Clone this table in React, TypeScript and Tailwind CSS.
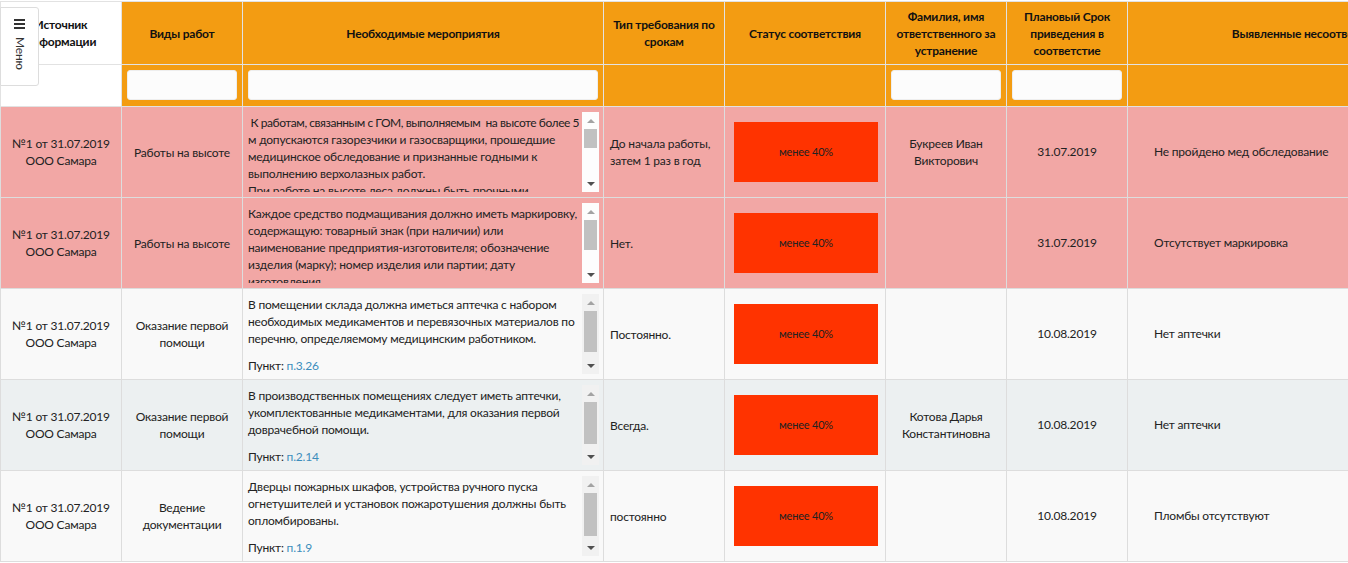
import React from "react";

type Row = {
  bg: string;
  track: string;
  kind: string[];
  lines: string[];
  tightFirst?: boolean;
  punkt?: string;
  term: string[];
  name: string[];
  date: string;
  issue: string;
  thumbH: number;
};

const rows: Row[] = [
  {
    bg: "bg-[#f2a7a5]",
    track: "bg-[#fdfdfd]",
    kind: ["Работы на высоте"],
    lines: [
      "\u00a0К работам, связанным с ГОМ, выполняемым \u00a0на высоте более 5",
      "м допускаются газорезчики и газосварщики, прошедшие",
      "медицинское обследование и признанные годными к",
      "выполнению верхолазных работ.",
      "При работе на высоте леса должны быть прочными,",
    ],
    tightFirst: true,
    term: ["До начала работы,", "затем 1 раз в год"],
    name: ["Букреев Иван", "Викторович"],
    date: "31.07.2019",
    issue: "Не пройдено мед обследование",
    thumbH: 19,
  },
  {
    bg: "bg-[#f2a7a5]",
    track: "bg-[#fdfdfd]",
    kind: ["Работы на высоте"],
    lines: [
      "Каждое средство подмащивания должно иметь маркировку,",
      "содержащую: товарный знак (при наличии) или",
      "наименование предприятия-изготовителя; обозначение",
      "изделия (марку); номер изделия или партии; дату",
      "изготовления.",
    ],
    term: ["Нет."],
    name: [],
    date: "31.07.2019",
    issue: "Отсутствует маркировка",
    thumbH: 30,
  },
  {
    bg: "bg-[#f9f9f9]",
    track: "bg-[#f1f1f1]",
    kind: ["Оказание первой", "помощи"],
    lines: [
      "В помещении склада должна иметься аптечка с набором",
      "необходимых медикаментов и перевязочных материалов по",
      "перечню, определяемому медицинским работником.",
    ],
    punkt: "п.3.26",
    term: ["Постоянно."],
    name: [],
    date: "10.08.2019",
    issue: "Нет аптечки",
    thumbH: 41,
  },
  {
    bg: "bg-[#ecf0f1]",
    track: "bg-[#f1f1f1]",
    kind: ["Оказание первой", "помощи"],
    lines: [
      "В производственных помещениях следует иметь аптечки,",
      "укомплектованные медикаментами, для оказания первой",
      "доврачебной помощи.",
    ],
    punkt: "п.2.14",
    term: ["Всегда."],
    name: ["Котова Дарья", "Константиновна"],
    date: "10.08.2019",
    issue: "Нет аптечки",
    thumbH: 42,
  },
  {
    bg: "bg-[#f9f9f9]",
    track: "bg-[#f1f1f1]",
    kind: ["Ведение", "документации"],
    lines: [
      "Дверцы пожарных шкафов, устройства ручного пуска",
      "огнетушителей и установок пожаротушения должны быть",
      "опломбированы.",
    ],
    punkt: "п.1.9",
    term: ["постоянно"],
    name: [],
    date: "10.08.2019",
    issue: "Пломбы отсутствуют",
    thumbH: 43,
  },
];

const headers: { w: string; lines: string[]; white?: boolean; filter?: boolean }[] = [
  { w: "w-[121px]", lines: ["Источник", "информации"], white: true },
  { w: "w-[121px]", lines: ["Виды работ"], filter: true },
  { w: "w-[361px]", lines: ["Необходимые мероприятия"], filter: true },
  { w: "w-[121px]", lines: ["Тип требования по", "срокам"] },
  { w: "w-[161px]", lines: ["Статус соответствия"] },
  { w: "w-[121px]", lines: ["Фамилия, имя", "ответственного за", "устранение"], filter: true },
  { w: "w-[121px]", lines: ["Плановый Срок", "приведения в", "соответстие"], filter: true },
  { w: "w-[366px]", lines: ["Выявленные несоответствия"] },
];

const FakeScroll: React.FC<{ track: string; thumbH: number }> = ({ track, thumbH }) => (
  <div className={`w-[17px] h-[80px] shrink-0 flex flex-col items-center ${track}`}>
    <div className="h-[17px] flex items-center justify-center">
      <div className="w-0 h-0 border-l-[4px] border-r-[4px] border-b-[4px] border-l-transparent border-r-transparent border-b-[#a3a3a3]" />
    </div>
    <div className="w-[13px] bg-[#c1c1c1]" style={{ height: thumbH }} />
    <div className="flex-1" />
    <div className="h-[17px] flex items-center justify-center">
      <div className="w-0 h-0 border-l-[4px] border-r-[4px] border-t-[4px] border-l-transparent border-r-transparent border-t-[#505050]" />
    </div>
  </div>
);

const Lines: React.FC<{ lines: string[]; tightFirst?: boolean }> = ({ lines, tightFirst }) => (
  <>
    {lines.map((l, i) => (
      <div key={i} className={tightFirst && i === 0 ? "tracking-[-0.45px]" : ""}>
        {l}
      </div>
    ))}
  </>
);

export default function App() {
  return (
    <div className="relative w-[1348px] h-[563px] overflow-hidden bg-white pt-px font-['Lato','Noto_Sans',sans-serif] text-[12px] tracking-[-0.2px] text-[#222]">
      <table className="table-fixed border-collapse w-[1493px]">
        <colgroup>
          {headers.map((h, i) => (
            <col key={i} className={h.w} />
          ))}
        </colgroup>
        <thead>
          <tr className="border-t border-[#c8c8c8]">
            {headers.map((h, i) => (
              <th
                key={i}
                className={`p-0 border border-[#e2e2e2] font-bold ${h.white ? "bg-white" : "bg-[#f39c12]"}`}
              >
                <div className="h-[62px] flex flex-col items-center justify-center leading-[17px] text-center text-[#111]">
                  <Lines lines={h.lines} />
                </div>
              </th>
            ))}
          </tr>
          <tr>
            {headers.map((h, i) => (
              <th
                key={i}
                className={`p-0 border border-[#e2e2e2] ${h.white ? "bg-white" : "bg-[#f39c12]"}`}
              >
                <div className={`h-[41px] px-[5px] flex items-center ${h.white ? "" : "border-b border-b-[#f39c12]"}`}>
                  {h.filter && (
                    <input className="w-full h-[30px] rounded-[3px] bg-[#fcfcfc] border border-[#eee] outline-none" />
                  )}
                </div>
              </th>
            ))}
          </tr>
        </thead>
        <tbody>
          {rows.map((r, i) => (
            <tr key={i} className={r.bg}>
              <td className="p-0 border border-[#ddd]">
                <div className="h-[90px] flex flex-col items-center justify-center leading-[17px] text-center">
                  <div>№1 от 31.07.2019</div>
                  <div>ООО Самара</div>
                </div>
              </td>
              <td className="p-0 border border-[#ddd]">
                <div className="h-[90px] flex flex-col items-center justify-center leading-[17px] text-center">
                  <Lines lines={r.kind} />
                </div>
              </td>
              <td className="p-0 border border-[#ddd]">
                <div className="h-[90px] px-[4px] py-[5px] flex">
                  <div className="flex-1 h-[80px] overflow-hidden pl-[1px] pt-[2px] leading-[17px] whitespace-nowrap">
                    <Lines lines={r.lines} tightFirst={r.tightFirst} />
                    {r.punkt && (
                      <div className="mt-[10px]">
                        Пункт: <span className="text-[#3c8dbc]">{r.punkt}</span>
                      </div>
                    )}
                  </div>
                  <FakeScroll track={r.track} thumbH={r.thumbH} />
                </div>
              </td>
              <td className="p-0 border border-[#ddd]">
                <div className="h-[90px] px-[6px] flex flex-col justify-center leading-[17px]">
                  <Lines lines={r.term} />
                </div>
              </td>
              <td className="p-0 border border-[#ddd]">
                <div className="h-[90px] pl-[9px] pr-[7px] flex items-center">
                  <div className="w-full h-[60px] bg-[#ff3300] flex items-center justify-center text-[11px] text-[#222]">
                    менее 40%
                  </div>
                </div>
              </td>
              <td className="p-0 border border-[#ddd]">
                <div className="h-[90px] flex flex-col items-center justify-center leading-[17px] text-center">
                  <Lines lines={r.name} />
                </div>
              </td>
              <td className="p-0 border border-[#ddd]">
                <div className="h-[90px] flex items-center justify-center">{r.date}</div>
              </td>
              <td className="p-0 border border-[#ddd]">
                <div className="h-[90px] pl-[26px] flex items-center">{r.issue}</div>
              </td>
            </tr>
          ))}
        </tbody>
      </table>

      <div className="absolute left-0 top-[7px] w-[39px] h-[79px] bg-white border border-[#ddd] rounded-r-[3px] flex flex-col items-center pt-[11px]">
        <div className="flex flex-col gap-[2px] w-[11px]">
          <div className="h-[2px] bg-[#333]" />
          <div className="h-[2px] bg-[#333]" />
          <div className="h-[2px] bg-[#333]" />
        </div>
        <div className="mt-[8px] [writing-mode:vertical-rl] text-[12px] text-[#333] leading-none">Меню</div>
      </div>
    </div>
  );
}
